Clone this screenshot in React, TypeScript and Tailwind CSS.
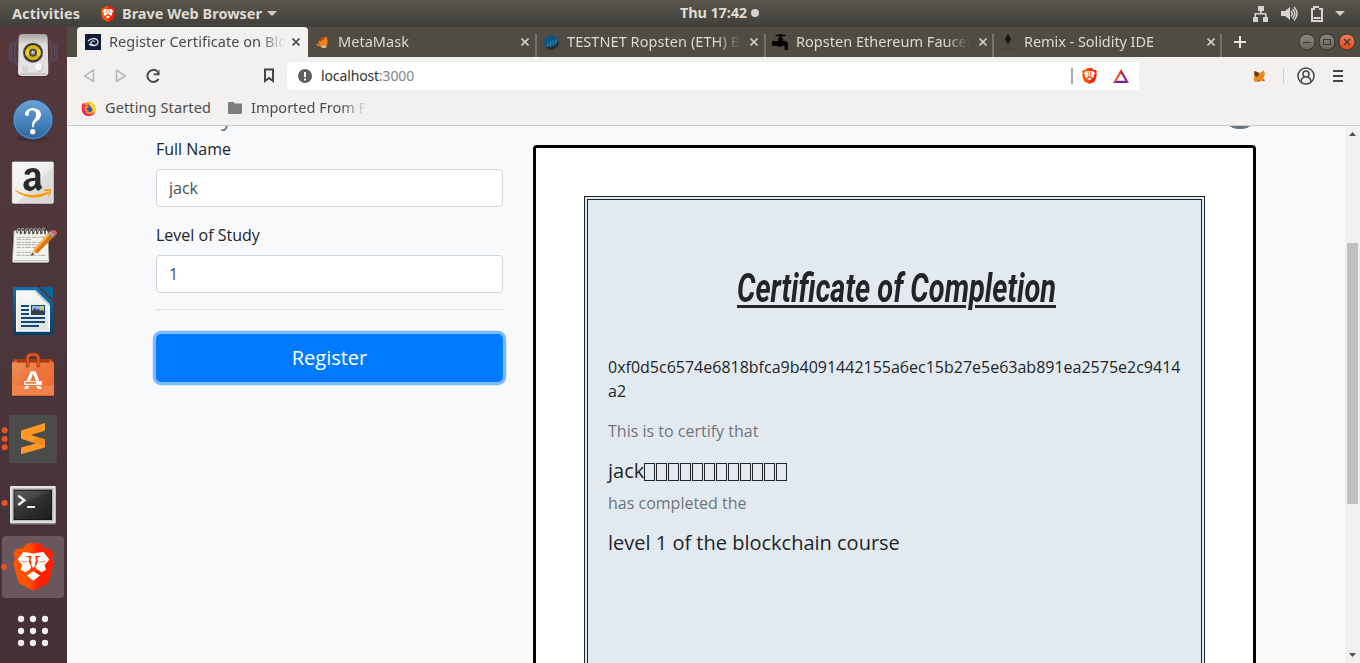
import { useLayoutEffect, useRef, useState, type ReactNode } from "react";

/** Single line label whose tracking is adjusted so that it spans `width` pixels. */
function Label({ text, width, className = "" }: { text: string; width: number; className?: string }) {
  const ref = useRef<HTMLSpanElement>(null);
  const [tracking, setTracking] = useState(0);
  useLayoutEffect(() => {
    if (ref.current) {
      const natural = ref.current.getBoundingClientRect().width;
      setTracking((width - natural) / text.length);
    }
  }, [text, width]);
  return (
    <span ref={ref} className={`inline-block whitespace-pre ${className}`} style={{ letterSpacing: tracking }}>
      {text}
    </span>
  );
}

function BraveLion({ className }: { className: string }) {
  return (
    <svg className={className} viewBox="38 428 123 146" preserveAspectRatio="none">
      <defs>
        <linearGradient id="braveShield" x1="0" x2="1" y1="0" y2="0">
          <stop offset="0" stopColor="#ff5500" />
          <stop offset="0.41" stopColor="#ff5000" />
          <stop offset="0.6" stopColor="#ff2000" />
          <stop offset="1" stopColor="#ff2000" />
        </linearGradient>
      </defs>
      <path
        d="M80 429H118L132 445Q145 441 152 449L160 461L155 476L160 489L147 540Q145 548 138 553L104 571Q99 574 94 571L61 553Q54 548 52 540L39 489L44 476L39 461L47 449Q54 441 67 445Z"
        fill="url(#braveShield)"
      />
      <path
        d="M69 455L87 458L99 461L111 458L129 455L147 478L133 495L137 509L124 517L107 506H92L75 517L61 509L66 495L52 478Z"
        fill="#fff"
      />
      <path d="M99 514L119 527L99 543L80 527Z" fill="#fff" />
      <path
        d="M74 469L91 467L94 470L91 480L97 501L99 503L101 501L107 480L104 470L107 467L124 469L110 473L113 484L105 502L109 507L99 513L89 507L93 502L85 484L88 473Z"
        fill="#ff3a00"
      />
      <path d="M94 468H104L103 482L105 496L99 503L93 496L95 482Z" fill="#fff" />
      <path d="M63 483L75 486L82 484M136 483L124 486L117 484" stroke="#ff3a00" strokeWidth="2" fill="none" />
    </svg>
  );
}

function DockItem({ top, children }: { top: number; children: ReactNode }) {
  return (
    <svg className="h-16 w-[67px] shrink-0" viewBox={`0 ${top} 201 192`}>
      {children}
    </svg>
  );
}

function Dock() {
  return (
    <nav className="flex w-[67px] shrink-0 flex-col overflow-hidden bg-linear-to-b from-[#54383c] via-[#4b363b] to-[#432f37]">
      <div className="-mt-1 flex flex-col">
        <DockItem top={-9}>
          <defs>
            <linearGradient id="spk" x1="0" x2="0" y1="0" y2="1">
              <stop offset="0" stopColor="#a7a5a4" />
              <stop offset="0.25" stopColor="#dedddc" />
              <stop offset="1" stopColor="#e6e5e4" />
            </linearGradient>
          </defs>
          <g fill="none" stroke="#5f6f9b" strokeWidth="3" opacity="0.5">
            <path d="M50 42Q36 78 50 118M40 47Q28 78 40 111M31 54Q23 78 31 104" />
            <path d="M148 42Q162 78 148 118M158 47Q170 78 158 111M167 54Q175 78 167 104" />
          </g>
          <rect x="52" y="144" width="94" height="8" rx="4" fill="#2c1d20" opacity="0.5" />
          <path d="M66 24H132Q142 24 143 36L145 138Q145 150 134 150H66Q54 150 54 138L56 36Q57 24 66 24Z" fill="url(#spk)" />
          <path d="M60 140Q60 148 70 148H130Q140 148 140 140Z" fill="#c9c8c7" />
          <circle cx="99" cy="80" r="30" fill="#4a4a47" />
          <circle cx="99" cy="80" r="26" fill="#2b2a26" />
          <circle cx="99" cy="80" r="23" fill="#d8b416" />
          <path d="M99 80L80 68A23 23 0 0 0 78 90ZM99 80L118 68A23 23 0 0 1 120 90Z" fill="#f0d02c" />
          <circle cx="99" cy="80" r="12" fill="#4b4434" />
          <circle cx="99" cy="80" r="7" fill="#8a9296" />
          <circle cx="98" cy="79" r="3" fill="#eee" />
          <rect x="68" y="120" width="15" height="17" rx="4" fill="#d9d8d6" stroke="#c3c2c0" />
          <circle cx="118" cy="125" r="12" fill="#bdbcba" />
          <circle cx="116" cy="123" r="11" fill="#f7f7f6" />
        </DockItem>
        <DockItem top={183}>
          <defs>
            <linearGradient id="help" x1="0" x2="0" y1="0" y2="1">
              <stop offset="0" stopColor="#69a3d6" />
              <stop offset="0.5" stopColor="#4a86bf" />
              <stop offset="1" stopColor="#2a649d" />
            </linearGradient>
          </defs>
          <ellipse cx="99" cy="338" rx="50" ry="9" fill="#2c1c22" opacity="0.3" />
          <circle cx="99" cy="281" r="59" fill="url(#help)" stroke="#24588d" strokeWidth="2" />
          <circle cx="99" cy="281" r="56" fill="none" stroke="#6fa6d8" strokeWidth="2" />
          <path
            d="M80 270Q73 267 75 261Q80 247 99 246Q123 248 123 266Q122 279 108 287Q102 292 101 304H96Q94 291 102 282Q110 273 108 262Q105 253 96 253Q87 254 87 261Q88 269 80 270Z"
            fill="#fff"
          />
          <circle cx="98" cy="317" r="8" fill="#fff" />
        </DockItem>
        <DockItem top={375}>
          <defs>
            <linearGradient id="amz" x1="0" x2="1" y1="0" y2="1">
              <stop offset="0" stopColor="#fafafa" />
              <stop offset="0.55" stopColor="#ececec" />
              <stop offset="0.56" stopColor="#dedede" />
              <stop offset="1" stopColor="#d5d5d5" />
            </linearGradient>
          </defs>
          <rect x="36" y="409" width="125" height="126" rx="5" fill="#2e1e24" opacity="0.5" />
          <rect x="37" y="408" width="123" height="124" rx="3" fill="url(#amz)" stroke="#fff" strokeWidth="2" />
          <path
            d="M73 445Q76 426 99 426Q121 427 121 447V471Q121 479 127 485L115 495Q109 491 106 485Q98 495 87 495Q71 493 70 477Q70 456 106 455V449Q106 438 98 438Q90 438 88 447ZM106 464Q86 464 86 474Q87 484 95 482Q107 479 106 464Z"
            fill="#2a2a2a"
          />
          <path d="M45 491Q92 519 143 497L147 501Q98 532 46 495Z" fill="#ff9900" />
          <path d="M131 492Q146 487 153 491Q154 501 147 511L144 509Q148 500 147 496Q141 494 132 496Z" fill="#ff9900" />
        </DockItem>
        <DockItem top={15}>
          <rect x="36" y="78" width="112" height="84" rx="4" fill="#231820" opacity="0.6" />
          <path d="M42 62H140Q143 62 144 68L147 154Q147 158 143 158H41Q37 158 37 153Z" fill="#f3f3ee" stroke="#96968f" strokeWidth="2" />
          <path d="M41 152H146" stroke="#c6c6bd" strokeWidth="4" />
          <g stroke="#aeaea9" strokeWidth="3" strokeDasharray="13 3 7 2 18 3">
            <path d="M50 82H134M50 89H96M50 97H132M50 104H121M50 112H108M50 127H104M50 136H136" />
          </g>
          <g fill="none" stroke="#434340" strokeWidth="5">
            <path d="M52 70V59Q57 52 62 59V73M64 70V59Q69 52 74 59V73M77 70V59Q82 52 87 59V73M89 70V59Q94 52 99 59V73M101 70V59Q106 52 111 59V73M113 70V59Q118 52 123 59V73M126 70V59Q131 52 135 59V73" />
          </g>
          <g fill="none" stroke="#e9e9e7" strokeWidth="2">
            <path d="M52 67V58Q57 51 61 58M64 67V58Q69 51 73 58M77 67V58Q82 51 86 58M89 67V58Q94 51 98 58M101 67V58Q106 51 110 58M113 67V58Q118 51 122 58M126 67V58Q131 51 135 58" />
          </g>
          <path d="M93 137L100 119L111 129Z" fill="#e3c294" />
          <path d="M100 119L144 70L159 82L112 130Z" fill="#f7941e" />
          <path d="M106 124L151 75L159 82L112 130Z" fill="#d97212" />
          <path d="M103 120L147 72" stroke="#ffc777" strokeWidth="3" />
          <path d="M144 70L151 62L166 75L159 83Z" fill="#a5a39f" stroke="#6e6862" />
          <path d="M151 62Q164 56 171 66Q173 72 166 76Z" fill="#e05a5c" />
          <path d="M93 137L96 129L101 133Z" fill="#151515" />
        </DockItem>
        <DockItem top={207}>
          <defs>
            <linearGradient id="writer" x1="0" x2="0" y1="0" y2="1">
              <stop offset="0" stopColor="#0d72ae" />
              <stop offset="1" stopColor="#083f66" />
            </linearGradient>
            <linearGradient id="paper" x1="0" x2="0" y1="0" y2="1">
              <stop offset="0" stopColor="#f8f8f8" />
              <stop offset="1" stopColor="#e1e1e3" />
            </linearGradient>
          </defs>
          <path d="M46 231H113L159 277V368Q159 375 152 375H46Q39 375 39 368V238Q39 231 46 231Z" fill="url(#writer)" />
          <path d="M122 231H153Q159 231 159 238V268Z" fill="#0467a3" />
          <path d="M48 241H107L150 283V365H48Z" fill="#fbfbfb" />
          <path d="M52 245H105L145 285V361H52Z" fill="url(#paper)" />
          <path d="M107 241L150 283V290L104 245Z" fill="#c5c6c9" />
          <path d="M63 288H87M63 300H87M63 312H87M63 324H135M63 336H135M63 348H117" stroke="#0b4a76" strokeWidth="6" />
          <rect x="93" y="285" width="42" height="30" fill="#0b4a76" />
          <rect x="96" y="288" width="36" height="24" fill="#8bbdea" />
          <path d="M120 288H132V300Q122 300 120 288Z" fill="#e9c646" />
          <path d="M96 312V303L105 293L110 300L115 296L121 303L127 299L132 305V312Z" fill="#3b3f42" />
        </DockItem>
        <DockItem top={399}>
          <defs>
            <linearGradient id="bag" x1="0" x2="1" y1="0" y2="1">
              <stop offset="0" stopColor="#e9925a" />
              <stop offset="0.5" stopColor="#ee733a" />
              <stop offset="1" stopColor="#ec6a30" />
            </linearGradient>
          </defs>
          <rect x="37" y="548" width="125" height="12" rx="4" fill="#261a20" opacity="0.5" />
          <path d="M42 447H156L162 459H36Z" fill="#a83c14" />
          <path d="M36 458L50 448V458ZM162 458L148 448V458Z" fill="#e26a37" />
          <rect x="36" y="458" width="126" height="99" fill="url(#bag)" />
          <rect x="36" y="527" width="126" height="30" fill="#f48a53" opacity="0.65" />
          <path d="M83 467V445Q84 434 95 434H103Q114 434 115 445V467" fill="none" stroke="#a93b16" strokeWidth="11" strokeLinecap="round" />
          <path d="M83 467V445Q84 434 95 434H103Q114 434 115 445V467" fill="none" stroke="#dd5627" strokeWidth="7" strokeLinecap="round" />
          <path d="M92 484H107L118 512H108L99 491L91 512H80Z" fill="#fff" />
          <rect x="72" y="513" width="54" height="12" rx="2" fill="#fff" />
          <rect x="76" y="516" width="32" height="5" fill="#ef6f35" />
          <path d="M76 528H88L84 537H72ZM109 528H121L126 537H113Z" fill="#fff" />
        </DockItem>
        <DockItem top={21}>
          <rect x="27" y="45" width="144" height="144" rx="8" fill="#4b4b4b" />
          <path d="M28 184Q30 188 36 188H162Q169 188 170 184" fill="none" stroke="#565656" strokeWidth="2" />
          <path d="M135 69L66 91Q63 92 63 95V112Q63 116 66 117L132 139Q135 138 135 134V121Q135 118 132 117L92 105L132 93Q135 92 135 88Z" fill="#ff9822" />
          <path d="M110 130L66 142Q63 143 63 146V163L132 143Q135 142 135 138V128L122 125Z" fill="#ff9822" />
          <path d="M92 124L132 138L135 132V121Q135 118 132 117L120 114Z" fill="#f08a1b" />
          <circle cx="14" cy="91" r="9" fill="#e95420" />
          <circle cx="14" cy="117" r="9" fill="#e95420" />
          <circle cx="14" cy="142" r="9" fill="#e95420" />
        </DockItem>
        <DockItem top={213}>
          <defs>
            <linearGradient id="term" x1="0" x2="1" y1="0" y2="1">
              <stop offset="0" stopColor="#515151" />
              <stop offset="0.5" stopColor="#303030" />
              <stop offset="1" stopColor="#1d1d1d" />
            </linearGradient>
          </defs>
          <rect x="30" y="259" width="138" height="115" rx="4" fill="#6d6a6b" />
          <rect x="30" y="258" width="137" height="112" rx="3" fill="#e3e3e2" />
          <rect x="36" y="264" width="125" height="100" fill="#bcbcbb" />
          <rect x="41" y="269" width="115" height="91" fill="#161616" />
          <rect x="44" y="272" width="109" height="85" fill="url(#term)" />
          <path d="M44 272H153L44 322Z" fill="#fff" opacity="0.07" />
          <path d="M55 287L73 301L55 315" fill="none" stroke="#f3f3f3" strokeWidth="7" />
          <rect x="81" y="318" width="24" height="6" fill="#f3f3f3" />
          <circle cx="14" cy="309" r="9" fill="#e95420" />
        </DockItem>
        <div className="flex h-16 items-center pl-0.5">
          <div className="flex h-[62px] w-[62px] items-center rounded bg-[#6a575d]">
            <span className="-ml-px size-1.5 rounded-full bg-[#e95420]" />
            <BraveLion className="ml-[6px] h-[48px] w-[41px]" />
          </div>
        </div>
        <DockItem top={597}>
          <g fill="#f1efef">
            {[657, 693, 729].map((y) => [63, 99, 135].map((x) => <circle key={`${x}-${y}`} cx={x} cy={y} r="9.5" />))}
          </g>
        </DockItem>
      </div>
    </nav>
  );
}

function SystemBar() {
  return (
    <header className="grid h-[27px] grid-cols-[680px_1fr_auto] items-center bg-linear-to-b from-[#59564e] to-[#403f39] text-[14.5px] font-bold text-[#dfdbd2]">
      <div className="flex items-center pl-3">
        <Label text="Activities" width={68} />
        <BraveLion className="ml-[21px] h-4 w-[14px]" />
        <Label text="Brave Web Browser" width={140} className="ml-[7px]" />
        <svg className="ml-[5px] h-[5px] w-[10px]" viewBox="0 0 10 5">
          <path d="M0 0H10L5 5Z" fill="#cfccc5" />
        </svg>
      </div>
      <div className="flex items-center pb-[2px]">
        <Label text="Thu 17:42" width={67} />
        <span className="ml-1 size-2 rounded-full bg-[#d3d0cb]" />
      </div>
      <svg className="mr-[14px] h-[18px] w-[93px]" viewBox="0 0 93 18" fill="#d6d3ce">
        <path d="M5 1h6v5H8.700v2h4.800v4H15v5h-5v-5h2V9.500H3V12h2v5H0v-5h1.500V8h5.500V6H5z" />
        <path d="M28 6h4l5-4v13l-5-4h-4z" />
        <path d="M38 6Q40.5 8.500 38 11.500M39.500 4Q44 8.500 39.500 13.500M41 2Q47 8.500 41 15.500" fill="none" stroke="#d6d3ce" strokeWidth="1.500" />
        <path d="M60 1h6v2h4v14H58V3h2zM60 5v10h8V5h-2V3h-4v2z" fillRule="evenodd" />
        <path d="M60.500 12h7v2h-7z" />
        <path d="M82 6H92L87 11Z" />
      </svg>
    </header>
  );
}

function Close({ dark = false }: { dark?: boolean }) {
  return (
    <svg className={dark ? "size-2 text-[#4c4c4c]" : "size-2 text-[#cfccc4]"} viewBox="0 0 8 8" fill="none" stroke="currentColor" strokeWidth="1.600">
      <path d="M0.500 0.500L7.500 7.500M7.500 0.500L0.500 7.500" />
    </svg>
  );
}

function FoxIcon({ front = false }: { front?: boolean }) {
  return (
    <svg className="size-3" viewBox="0 0 36 36">
      {front ? (
        <>
          <path d="M3 4L15 7L22 8L33 1L36 14L31 23L35 34L24 32L18 36L5 35L1 26L5 17Z" fill="#ef8a22" />
          <path d="M3 3L15 7L19 14L10 21L4 16Z" fill="#6f3d1c" />
          <path d="M24 19L29 20L25 23ZM27 31L34 33L35 28Z" fill="#a9541c" />
          <path d="M15 31L20 30L19 34Z" fill="#3b332f" />
        </>
      ) : (
        <>
          <path d="M14 8L23 3L32 3L35 16L33 30H5L0 26L8 18Z" fill="#f08019" />
          <path d="M12 7L20 2L28 5L20 12L12 17Z" fill="#9a4a17" />
          <path d="M0 26L9 18L12 26Z" fill="#bb5a14" />
          <path d="M12 31L22 28L32 31L30 36H20Z" fill="#d9b89d" />
        </>
      )}
    </svg>
  );
}

function Tab({
  icon,
  text,
  width,
  className,
}: {
  icon: ReactNode;
  text: string;
  width: number;
  className: string;
}) {
  return (
    <div className={`flex h-[30px] shrink-0 items-center ${className}`}>
      <span className="ml-[6px] flex w-4 shrink-0 justify-center">{icon}</span>
      <span className="ml-2 w-[174px] shrink-0 overflow-hidden mask-r-from-86% mask-r-to-100% pb-[2px] text-[#dedacf]">
        <Label text={text} width={width} />
      </span>
      <span className="ml-[9px] w-2 shrink-0">
        <Close />
      </span>
      <span className="mt-[7px] ml-auto h-[23px] w-0.5 bg-[#77736b]" />
    </div>
  );
}

function TabStrip() {
  return (
    <div className="flex h-[30px] bg-[#504c44] pl-[10px] text-[14.5px] leading-[28px]">
      <div className="flex h-[30px] w-[231px] shrink-0 items-center rounded-t bg-[#f2f1f0]">
        <svg className="ml-2 size-4" viewBox="0 0 48 48">
          <rect width="48" height="48" fill="#101f38" />
          <path
            d="M9 21Q17 12 29 14Q40 17 39 25Q37 35 26 34Q16 32 18 25Q21 19 29 22M12 30Q20 37 30 34"
            fill="none"
            stroke="#e7ecf0"
            strokeWidth="3.500"
          />
        </svg>
        <span className="ml-2 w-[176px] overflow-hidden mask-r-from-86% mask-r-to-100% pb-[2px] text-[#4a4a4a]">
          <Label text="Register Certificate on Blo" width={178} />
        </span>
        <span className="ml-[7px] w-2">
          <Close dark />
        </span>
      </div>
      <Tab className="w-[229px]" text="MetaMask" width={71} icon={<FoxIcon />} />
      <Tab
        className="w-[229px]"
        text="TESTNET Ropsten (ETH) Bl"
        width={177}
        icon={
          <svg className="size-[15px]" viewBox="0 0 45 45">
            <circle cx="22" cy="22" r="22" fill="#0c5484" />
            <path d="M5 37Q36 38 44 18Q48 38 28 44Q13 47 5 37Z" fill="#2b2f31" />
            <path d="M12 24V34M20 20V34M28 16V31M35 12V25" stroke="#3b7aa3" strokeWidth="4" />
          </svg>
        }
      />
      <Tab
        className="w-[228px]"
        text="Ropsten Ethereum Faucet"
        width={176}
        icon={
          <svg className="size-4" viewBox="0 0 48 48" fill="#000">
            <path d="M11 2H22V0H30V2H41V7H29V13H33V20H39Q48 22 48 32V48H38V38Q38 35 34 35H29V38H17V35H0V22H18V13H22V7H11Z" />
          </svg>
        }
      />
      <Tab
        className="w-[228px]"
        text="Remix - Solidity IDE"
        width={130}
        icon={
          <svg className="size-4" viewBox="0 0 48 48">
            <path d="M24 0L34 16L24 23L14 16Z" fill="#111" />
            <path d="M14 19L24 25L34 19L24 31Z" fill="#1a1a1a" />
            <path d="M2 43H46" stroke="#46433d" strokeWidth="4" strokeDasharray="5 2" />
          </svg>
        }
      />
      <svg className="mt-[9px] ml-3 size-3" viewBox="0 0 12 12" stroke="#e8e5df" strokeWidth="2">
        <path d="M6 0V12M0 6H12" />
      </svg>
      <svg className="mt-[6px] mr-[4px] ml-auto h-[18px] w-[58px]" viewBox="0 0 58 18">
        <defs>
          <linearGradient id="winGrey" x1="0" x2="0" y1="0" y2="1">
            <stop offset="0" stopColor="#8b8880" />
            <stop offset="1" stopColor="#65625b" />
          </linearGradient>
          <linearGradient id="winRed" x1="0" x2="0" y1="0" y2="1">
            <stop offset="0" stopColor="#f37f5b" />
            <stop offset="1" stopColor="#de4a18" />
          </linearGradient>
        </defs>
        <circle cx="9" cy="9" r="8" fill="url(#winGrey)" stroke="#35332e" />
        <circle cx="29" cy="9" r="8" fill="url(#winGrey)" stroke="#35332e" />
        <circle cx="49" cy="9" r="8" fill="url(#winRed)" stroke="#35332e" />
        <g fill="none" stroke="#3a3833">
          <path d="M5 9.500H13" />
          <rect x="25.500" y="6.500" width="7" height="5" />
          <path d="M46 6L52 12M52 6L46 12" strokeWidth="1.300" />
        </g>
      </svg>
    </div>
  );
}

function Toolbar() {
  return (
    <div className="flex h-9 items-center bg-[#f2f1f0] pt-[1px]">
      <svg className="ml-4 h-4 w-[78px]" viewBox="0 0 78 16" fill="none">
        <path d="M10.500 2V13.500L1.800 7.800Z" stroke="#b9b8b7" strokeWidth="1.600" strokeLinejoin="round" />
        <path d="M33.500 2V13.500L42.200 7.800Z" stroke="#b9b8b7" strokeWidth="1.600" strokeLinejoin="round" />
        <path d="M75.500 11A6 6 0 1 1 74.500 3.500" stroke="#444" strokeWidth="2" />
        <path d="M76.500 1.500V7.300H70.700V5.500H73.500Z" fill="#444" />
      </svg>
      <svg className="ml-[103px] h-[15px] w-[10px]" viewBox="0 0 10 15" fill="none" stroke="#454545" strokeWidth="2">
        <path d="M1 1.500H9V13L5 10L1 13Z" />
      </svg>
      <div className="ml-[13px] flex h-7 w-[852px] items-center rounded bg-white">
        <svg className="ml-[11px] size-[14px]" viewBox="0 0 14 14">
          <circle cx="7" cy="7" r="7" fill="#5b5e63" />
          <path d="M7 3V8M7 9.500V11.500" stroke="#fff" strokeWidth="2" />
        </svg>
        <span className="ml-[9px] flex text-[14px] text-[#333]">
          <Label text="localhost" width={58} />
          <Label text=":3000" width={35} className="text-[#80868b]" />
        </span>
        <span className="ml-auto h-4 w-0.5 bg-[#a9acaf]" />
        <BraveLion className="ml-[9px] h-4 w-[15px]" />
        <svg className="mr-[10px] ml-4 h-[14px] w-4" viewBox="0 0 48 42">
          <path d="M24 0L0 42L11 35L24 13Z" fill="#ff4724" />
          <path d="M24 0L48 42L37 35L24 13Z" fill="#9e1f63" />
          <path d="M0 42H48L37 35H11Z" fill="#662d91" />
        </svg>
      </div>
      <span className="ml-[114px]">
        <FoxIcon front />
      </span>
      <span className="ml-[18px] h-4 w-px bg-[#cfcecd]" />
      <svg className="ml-[13px] size-[18px]" viewBox="0 0 18 18" fill="none" stroke="#454545" strokeWidth="1.500">
        <circle cx="9" cy="9" r="8" />
        <circle cx="9" cy="7" r="3" />
        <path d="M4 15Q4.500 10.500 7.500 10.300M14 15Q13.500 10.500 10.500 10.300" />
      </svg>
      <svg className="ml-[18px] h-3 w-[10px]" viewBox="0 0 10 12" stroke="#444" strokeWidth="2">
        <path d="M0 1H10M0 6H10M0 11H10" />
      </svg>
    </div>
  );
}

function Bookmarks() {
  return (
    <div className="flex h-[33px] items-center border-b border-[#cdcccd] bg-[#f2f1f0] pb-[2px] text-[14.5px] text-[#4c4c4c]">
      <svg className="mt-[1px] ml-[14px] size-[15px]" viewBox="0 0 45 45">
        <circle cx="23" cy="24" r="21" fill="#ff9a1f" />
        <path d="M2 21Q1 8 9 5Q9 9 13 11L23 14L12 27Q12 40 26 44Q5 46 2 21Z" fill="#f2334a" />
        <path d="M2 24Q5 46 26 45Q39 43 43 32Q32 43 19 38Q11 34 12 25Z" fill="#e8256b" />
        <circle cx="24" cy="22" r="11" fill="#2853b8" />
        <path d="M11 16L20 13Q24 16 24 19L17 22Q17 29 26 29Q16 35 11 26Z" fill="#ff8a16" />
        <path d="M25 0Q38 4 43 18Q45 30 37 36Q37 22 26 14Q22 8 25 0Z" fill="#ffd332" />
      </svg>
      <Label text="Getting Started" width={106} className="ml-[9px]" />
      <svg className="ml-[17px] h-3 w-[14px]" viewBox="0 0 14 12" fill="#7d7d7d">
        <path d="M1 0H5.500L7 1.500H13Q14 1.500 14 2.500V11Q14 12 13 12H1Q0 12 0 11V1Q0 0 1 0Z" />
      </svg>
      <span className="ml-[9px] w-[116px] overflow-hidden mask-r-from-78% mask-r-to-100%">
        <Label text="Imported From F" width={115} />
      </span>
    </div>
  );
}

function Field({ label, value }: { label: string; value: string }) {
  return (
    <label className="mb-4 block">
      <span className="mb-2 block">{label}</span>
      <input
        type="text"
        defaultValue={value}
        className="block h-[38px] w-full rounded border border-[#ced4da] bg-white px-3 text-[#495057] outline-none"
      />
    </label>
  );
}

function Page() {
  return (
    <div className="flex min-h-0 flex-1 bg-[#f8f9fb] font-['Open_Sans',sans-serif] text-base leading-6 text-[#212529]">
      <main className="flex min-w-0 flex-1 overflow-hidden">
        <section className="ml-[89px] w-[347px] shrink-0">
          <div className="h-[11px] overflow-hidden">
            <span className="-mt-[26px] ml-[65px] block text-2xl leading-8 text-[#6c757d]">y</span>
          </div>
          <Field label="Full Name" value="jack" />
          <Field label="Level of Study" value="1" />
          <hr className="mb-6 border-t border-[#dfe0e2]" />
          <button className="block h-12 w-full rounded-[5px] bg-[#007bff] text-xl text-white shadow-[0_0_0_3.200px_rgba(0,123,255,0.500)]">
            Register
          </button>
        </section>
        <section className="ml-[30px] flex w-[723px] shrink-0 flex-col">
          <div className="mr-[3px] flex h-[19px] shrink-0 items-start justify-end">
            <span className="-mt-[17px] h-5 w-[26px] rounded-full bg-[#6c757d]" />
          </div>
          <div className="h-[900px] shrink-0 rounded border-[3px] border-black bg-white px-12 pt-12">
            <div className="h-[800px] border-4 border-double border-[#212529] bg-[#e2eaf0] px-5 pt-[64px]">
              <h1 className="flex h-12 justify-center">
                <span className="w-[316px]">
                  <span className="inline-block origin-left scale-x-[0.725] font-['Roboto'] text-[40px] leading-[50px] font-bold whitespace-nowrap italic underline decoration-[3px] underline-offset-[3px]">
                    Certificate of Completion
                  </span>
                </span>
              </h1>
              <p className="mt-[43px] mb-4 break-all">
                0xf0d5c6574e6818bfca9b4091442155a6ec15b27e5e63ab891ea2575e2c9414a2
              </p>
              <p className="mb-4 text-[#6c757d]">This is to certify that</p>
              <h5 className="mb-2 flex h-6 items-center text-xl">
                jack
                <span className="mt-[2px] flex gap-px">
                  {Array.from({ length: 12 }, (_, i) => (
                    <span key={i} className="h-[18px] w-[11px] border border-[#212529]" />
                  ))}
                </span>
              </h5>
              <p className="mb-4 text-[#6c757d]">has completed the</p>
              <h5 className="text-xl leading-6">level 1 of the blockchain course</h5>
            </div>
          </div>
        </section>
      </main>
      <div className="flex w-[15px] shrink-0 flex-col items-center bg-[#f1f1f1]">
        <svg className="mt-1.5 h-1 w-[7px] shrink-0" viewBox="0 0 7 4" fill="#505050">
          <path d="M0 4H7L3.500 0Z" />
        </svg>
        <span className="mt-[107px] h-[261px] w-[11px] bg-[#c1c1c1]" />
        <svg className="mt-auto mb-[6px] h-1 w-[7px] shrink-0" viewBox="0 0 7 4" fill="#505050">
          <path d="M0 0H7L3.500 4Z" />
        </svg>
      </div>
    </div>
  );
}

export default function App() {
  return (
    <div className="flex h-[663px] w-[1360px] flex-col overflow-hidden font-['Noto_Sans',sans-serif]">
      <SystemBar />
      <div className="flex min-h-0 flex-1">
        <Dock />
        <div className="flex min-w-0 flex-1 flex-col">
          <TabStrip />
          <Toolbar />
          <Bookmarks />
          <Page />
        </div>
      </div>
    </div>
  );
}
